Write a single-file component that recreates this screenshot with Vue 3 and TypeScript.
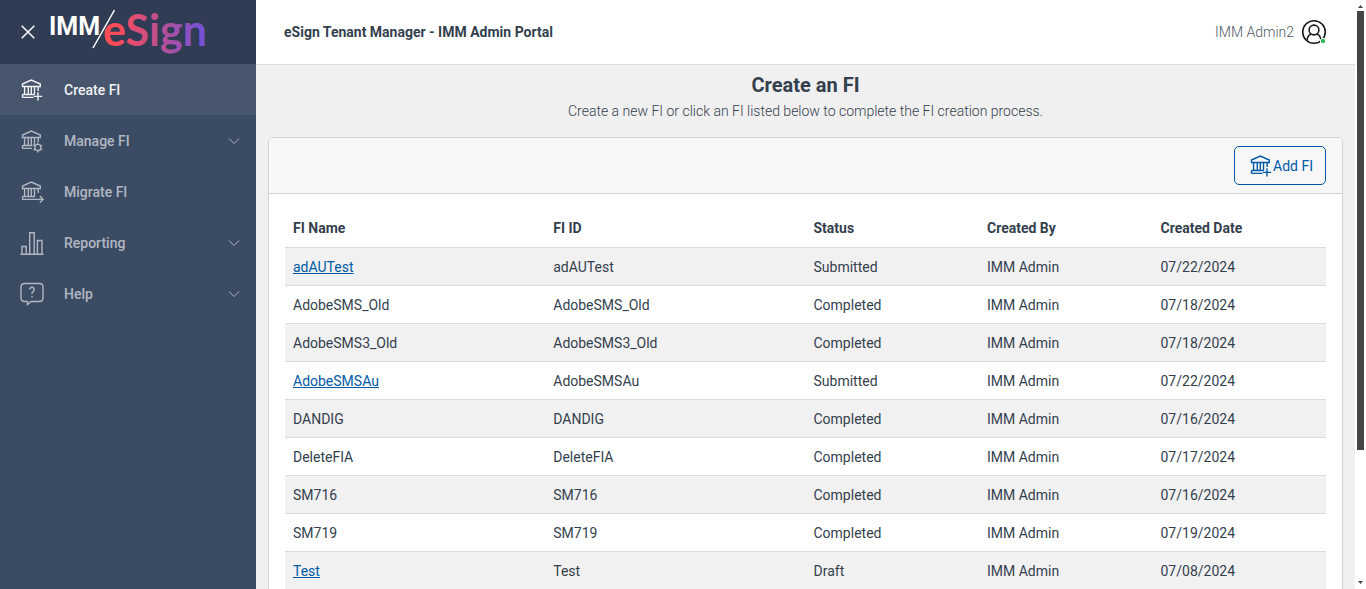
<script setup lang="ts">
interface NavItem {
  label: string
  icon: 'create' | 'manage' | 'migrate' | 'report' | 'help'
  expandable: boolean
  active?: boolean
}

interface Institution {
  name: string
  id: string
  status: string
  createdBy: string
  createdDate: string
  linked?: boolean
}

const navItems: NavItem[] = [
  { label: 'Create FI', icon: 'create', expandable: false, active: true },
  { label: 'Manage FI', icon: 'manage', expandable: true },
  { label: 'Migrate FI', icon: 'migrate', expandable: false },
  { label: 'Reporting', icon: 'report', expandable: true },
  { label: 'Help', icon: 'help', expandable: true },
]

const columns: string[] = ['FI Name', 'FI ID', 'Status', 'Created By', 'Created Date']

function row(name: string, status: string, createdDate: string, linked = false): Institution {
  return { name, id: name, status, createdBy: 'IMM Admin', createdDate, linked }
}

const institutions: Institution[] = [
  row('adAUTest', 'Submitted', '07/22/2024', true),
  row('AdobeSMS_Old', 'Completed', '07/18/2024'),
  row('AdobeSMS3_Old', 'Completed', '07/18/2024'),
  row('AdobeSMSAu', 'Submitted', '07/22/2024', true),
  row('DANDIG', 'Completed', '07/16/2024'),
  row('DeleteFIA', 'Completed', '07/17/2024'),
  row('SM716', 'Completed', '07/16/2024'),
  row('SM719', 'Completed', '07/19/2024'),
  row('Test', 'Draft', '07/08/2024', true),
]
</script>

<template>
  <div class="app">
    <aside class="sidebar">
      <div class="brand">
        <button class="close" type="button" aria-label="Close menu">
          <svg width="14" height="14" viewBox="0 0 14 14"><path d="M.7.7l12.6 12.6M13.3.7L.7 13.3" /></svg>
        </button>
        <svg class="logo" width="160" height="56" viewBox="0 0 160 56" role="img" aria-label="IMM eSign">
          <defs>
            <linearGradient id="brand" gradientUnits="userSpaceOnUse" x1="56" y1="0" x2="157" y2="0">
              <stop offset="0.1" stop-color="#ff4b55" />
              <stop offset="0.5" stop-color="#c44f8c" />
              <stop offset="1" stop-color="#6f52d9" />
            </linearGradient>
          </defs>
          <text class="imm" x="1" y="31">IMM</text>
          <text class="esign" x="55" y="42" fill="url(#brand)">eSign</text>
          <path class="slash" d="M66.500 6L45 44" />
        </svg>
      </div>
      <nav>
        <a v-for="item in navItems" :key="item.label" href="#" class="nav-item" :class="{ active: item.active }">
          <svg class="icon" width="24" height="24" viewBox="0 0 24 24">
            <template v-if="item.icon === 'report'">
              <path d="M.5 23.300H23.500M2 23V15.500H6.200V23M9.700 23V1.700H14.200V23M17.400 23V9.500H22V23" />
            </template>
            <template v-else-if="item.icon === 'help'">
              <path d="M5 1.500H19.500Q23 1.500 23 5V15.500Q23 19.500 19.500 19.500H11L7.500 22.500V19.500H5Q1 19.500 1 15.500V5Q1 1.500 5 1.500Z" />
              <path d="M9.800 7.600Q9.800 5.300 12 5.300T14.200 7.500Q14.200 8.800 13 9.600T12 12.300M12 14V15.500" />
            </template>
            <template v-else>
              <path d="M2.500 8.500V6L11.300 2L20.300 6V8.500ZM4.600 8.500V16.500M8.300 8.500V16.500M11.300 8.500V16.500M14.500 8.500V16.500M18.200 8.500V13" />
              <path v-if="item.icon === 'create'" d="M2.500 16.500H14.500M2.500 19.400H13.500M2.500 16.500V19.400M18 14.300V22.500M13.900 18.400H22.200" />
              <template v-else-if="item.icon === 'manage'">
                <path d="M2.500 16.500H12.500M2.500 19.400H12M2.500 16.500V19.400" />
                <circle cx="17.800" cy="18.500" r="3.100" />
                <path d="M17.800 13.500V15.500M17.800 21.500V23.500M13.500 16L15.300 17M20.300 20L22.100 21M13.500 21L15.300 20M20.300 17L22.100 16" />
              </template>
              <path v-else d="M2.500 16.500H15M2.500 19.400H23M2.500 16.500V19.400M19.800 16L23.200 19.400L19.800 22.500" />
            </template>
          </svg>
          <span class="nav-label">{{ item.label }}</span>
          <svg v-if="item.expandable" class="chevron" width="12" height="8" viewBox="0 0 12 8"><path d="M1 1.500L6 6.500L11 1.500" /></svg>
        </a>
      </nav>
    </aside>

    <div class="page">
      <header class="topbar">
        <h1>eSign Tenant Manager - IMM Admin Portal</h1>
        <button class="user" type="button">
          <span>IMM Admin2</span>
          <svg width="26" height="26" viewBox="0 0 26 26">
            <circle cx="13" cy="13" r="11.300" />
            <circle cx="13" cy="11" r="4.900" />
            <path d="M6 21.800Q6.500 16 10 15.200M20 21.800Q19.500 16 16 15.200" />
            <circle class="online" cx="22" cy="22" r="2.700" />
          </svg>
        </button>
      </header>

      <main>
        <h2>Create an FI</h2>
        <p class="lead">Create a new FI or click an FI listed below to complete the FI creation process.</p>
        <section class="card">
          <div class="card-head">
            <button class="add" type="button">
              <svg class="icon" width="24" height="24" viewBox="0 0 24 24">
                <path d="M2.500 8.500V6L11.300 2L20.300 6V8.500ZM4.600 8.500V16.500M8.300 8.500V16.500M11.300 8.500V16.500M14.500 8.500V16.500M18.200 8.500V13M2.500 16.500H14.500M2.500 19.400H13.500M2.500 16.500V19.400M18 14.300V22.500M13.900 18.400H22.200" />
              </svg>
              <span>Add FI</span>
            </button>
          </div>
          <div class="card-body">
            <table>
              <colgroup>
                <col class="wide" /><col class="wide" /><col /><col /><col />
              </colgroup>
              <thead>
                <tr><th v-for="column in columns" :key="column" scope="col">{{ column }}</th></tr>
              </thead>
              <tbody>
                <tr v-for="fi in institutions" :key="fi.name">
                  <td><a v-if="fi.linked" href="#">{{ fi.name }}</a><template v-else>{{ fi.name }}</template></td>
                  <td>{{ fi.id }}</td>
                  <td>{{ fi.status }}</td>
                  <td>{{ fi.createdBy }}</td>
                  <td>{{ fi.createdDate }}</td>
                </tr>
              </tbody>
            </table>
          </div>
        </section>
      </main>
    </div>

    <div class="scrollbar" aria-hidden="true">
      <svg width="7" height="11" viewBox="0 0 7 11"><path d="M1 8L3.500 5L6 8Z" /></svg>
      <div class="track"><div class="thumb"></div></div>
      <svg width="7" height="11" viewBox="0 0 7 11"><path d="M1 3L3.500 6L6 3Z" /></svg>
    </div>
  </div>
</template>

<style>
body {
  margin: 0;
  overflow: hidden;
}
</style>

<style scoped>
* {
  box-sizing: border-box;
}

.app {
  display: flex;
  height: 100vh;
  overflow: hidden;
  font-family: Roboto, "Liberation Sans", sans-serif;
  font-size: 14px;
  line-height: 20px;
  color: #343f4e;
  background: #fff;
}

button {
  font: inherit;
  background: none;
  border: 0;
  padding: 0;
  cursor: pointer;
}

svg {
  display: block;
  flex: none;
}

.sidebar {
  flex: 0 0 256px;
  background: #3c4b64;
  color: #b1b7c1;
}

.brand {
  display: flex;
  align-items: center;
  gap: 13px;
  height: 64px;
  padding-left: 21px;
  background: #303c54;
}

.close path {
  stroke: #fff;
  stroke-width: 1.5;
}

.logo {
  overflow: visible;
}

.imm {
  font-family: Roboto, sans-serif;
  font-weight: 700;
  font-size: 25px;
  fill: #fff;
}

.esign {
  font-family: Lato, sans-serif;
  font-weight: 700;
  font-size: 43px;
}

.slash {
  stroke: #fff;
  stroke-width: 1.5;
}

.nav-item {
  display: flex;
  align-items: center;
  height: 51px;
  padding: 0 16px 0 20px;
  color: #b1b7c1;
  text-decoration: none;
  font-weight: 500;
}

.nav-item.active {
  background: #48566d;
  color: #f1f2f4;
}

.nav-label {
  flex: 1;
  margin-left: 20px;
}

.icon path,
.icon circle {
  fill: none;
  stroke: currentColor;
  stroke-width: 1.4;
}

.chevron path {
  fill: none;
  stroke: currentColor;
}

.page {
  flex: 1;
  min-width: 0;
  background: #f0f0f0;
}

.topbar {
  display: flex;
  align-items: center;
  justify-content: space-between;
  height: 65px;
  padding: 0 28px;
  background: #fff;
  border-bottom: 1px solid #d8dbe0;
}

h1 {
  margin: 0;
  font-size: 14px;
  font-weight: 700;
}

.user {
  display: flex;
  align-items: center;
  gap: 7px;
  color: #4f5866;
  font-weight: 300;
}

.user svg {
  fill: none;
  stroke: #1c1c1c;
  stroke-width: 1.6;
}

.user .online {
  fill: #2eb85c;
  stroke: #fff;
  stroke-width: 1;
}

main {
  padding: 8px 12px;
}

h2 {
  margin: 0;
  font-size: 20px;
  line-height: 24px;
  font-weight: 700;
  text-align: center;
}

.lead {
  margin: 4px 0 16px;
  font-weight: 300;
  text-align: center;
}

.card {
  background: #fff;
  border: 1px solid #d0d3d8;
  border-radius: 5px;
  overflow: hidden;
}

.card-head {
  display: flex;
  justify-content: flex-end;
  padding: 8px 16px;
  background: #f7f7f7;
  border-bottom: 1px solid #d0d3d8;
}

.add {
  display: flex;
  align-items: center;
  height: 39px;
  padding: 0 12px 0 14px;
  color: #005aa5;
  border: 1px solid #005aa5;
  border-radius: 5px;
}

.card-body {
  padding: 16px;
}

table {
  width: 100%;
  table-layout: fixed;
  border-spacing: 0;
}

.wide {
  width: 25%;
}

th,
td {
  height: 38px;
  padding: 0 8px;
  text-align: left;
  border-bottom: 1px solid #d8dbe0;
}

th {
  padding-bottom: 2px;
}

tbody tr:nth-child(odd) {
  background: #f1f1f1;
}

td a {
  color: #005aa5;
}

.scrollbar {
  display: flex;
  flex-direction: column;
  flex: 0 0 11px;
  padding: 0 2px;
  background: #fff;
}

.scrollbar path {
  fill: #444;
}

.track {
  flex: 1;
}

.thumb {
  height: 77.500%;
  background: #444;
}
</style>
